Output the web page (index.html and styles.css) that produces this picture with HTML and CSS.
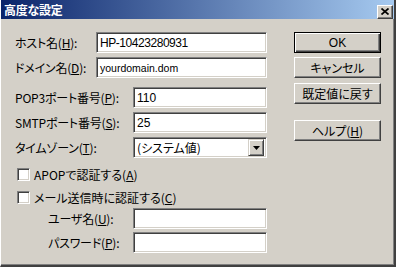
FILE: index.html
```html
<!DOCTYPE html>
<html lang="ja">
<head>
    <meta charset="UTF-8">
    <title>高度な設定</title>
    <link rel="stylesheet" href="styles.css">
</head>
<body>
    <div class="window">
        <div class="titlebar">
            <span class="title">高度な設定</span>
            <div class="close-btn">
                <svg width="8" height="7" viewBox="0 0 8 7"><path d="M0.5 0.5 L7.5 6.5 M7.5 0.5 L0.5 6.5" stroke="#000" stroke-width="1.7"/></svg>
            </div>
        </div>

        <div class="content">
            <div class="form">
                <div class="row">
                    <span class="label">ホスト名(<u>H</u>):</span>
                    <div class="field wide host-value">HP-10423280931</div>
                </div>
                <div class="row">
                    <span class="label">ドメイン名(<u>D</u>):</span>
                    <div class="field wide domain-value">yourdomain.dom</div>
                </div>

                <!-- port settings -->
                <div class="row spaced">
                    <span class="label">POP3ポート番号(<u>P</u>):</span>
                    <div class="field narrow">110</div>
                </div>
                <div class="row">
                    <span class="label">SMTPポート番号(<u>S</u>):</span>
                    <div class="field narrow">25</div>
                </div>
                <div class="row">
                    <span class="label">タイムゾーン(<u>T</u>):</span>
                    <div class="field narrow select">
                        <span class="select-text">(システム値)</span>
                        <div class="drop-btn">
                            <svg width="7" height="4" viewBox="0 0 7 4"><path d="M0 0 H7 L3.5 4 Z" fill="#000"/></svg>
                        </div>
                    </div>
                </div>

                <div class="check-row first">
                    <div class="checkbox"></div>
                    <span>APOPで認証する(<u>A</u>)</span>
                </div>
                <div class="check-row second">
                    <div class="checkbox"></div>
                    <span>メール送信時に認証する(<u>C</u>)</span>
                </div>

                <div class="row auth first">
                    <span class="label">ユーザ名(<u>U</u>):</span>
                    <div class="field narrow"></div>
                </div>
                <div class="row auth">
                    <span class="label">パスワード(<u>P</u>):</span>
                    <div class="field narrow"></div>
                </div>
            </div>

            <div class="buttons">
                <div class="btn default">OK</div>
                <div class="btn">キャンセル</div>
                <div class="btn">既定値に戻す</div>
                <div class="btn help">ヘルプ(<u>H</u>)</div>
            </div>
        </div>
    </div>
</body>
</html>
```

FILE: styles.css
```css
body {
    margin: 0;
    background: #d4d0c8;
    font-family: "Noto Sans CJK JP", "Liberation Sans", sans-serif;
    font-size: 12px;
    color: #000;
}

.window {
    width: 396px;
    height: 267px;
    box-sizing: border-box;
    background: #d4d0c8;
    border-left: 1px solid #ffffff;
    border-right: 2px solid #404040;
    border-bottom: 2px solid #404040;
    box-shadow: inset -1px -1px #808080;
}

/* Title bar */
.titlebar {
    height: 19px;
    display: flex;
    align-items: center;
    justify-content: space-between;
    background: linear-gradient(90deg, #0a246a, #a6caf0);
    padding: 0 1px 0 3px;
}
.title {
    color: #fff;
    font-weight: bold;
    font-size: 12px;
    line-height: 19px;
    letter-spacing: -0.3px;
}
.close-btn {
    width: 16px;
    height: 14px;
    box-sizing: border-box;
    margin-top: 4px;
    background: #d4d0c8;
    border: 1px solid;
    border-color: #fff #404040 #404040 #fff;
    box-shadow: inset -1px -1px #808080;
    display: flex;
    align-items: center;
    justify-content: center;
}

/* Main area */
.content {
    display: flex;
    padding: 13px 0 0 14px;
    gap: 27px;
}
.form {
    width: 252px;
    display: flex;
    flex-direction: column;
}
.row {
    display: flex;
    align-items: center;
    justify-content: space-between;
    height: 21px;
    margin-bottom: 4px;
}
.row.spaced {
    margin-top: 5px;
}
.label {
    font-feature-settings: "palt";
    white-space: nowrap;
    letter-spacing: -0.2px;
}
.row.auth {
    padding-left: 33px;
    margin-bottom: 3px;
}
.row.auth.first {
    margin-top: 4px;
}

/* Sunken edit fields */
.field {
    height: 21px;
    box-sizing: border-box;
    background: #fff;
    border: 1px solid;
    border-color: #808080 #fff #fff #808080;
    box-shadow: inset 1px 1px #404040, inset -1px -1px #d4d0c8;
    padding: 0 3px;
    display: flex;
    align-items: center;
    font-family: "Liberation Sans", sans-serif;
    font-size: 12px;
}
.field.wide {
    width: 171px;
}
.field.narrow {
    width: 134px;
}
.host-value {
    font-size: 12px;
    letter-spacing: -0.45px;
}
.domain-value {
    font-size: 10.5px;
}
.select {
    padding: 0 2px 0 3px;
    justify-content: space-between;
}
.select-text {
    font-family: "Noto Sans CJK JP", sans-serif;
    font-feature-settings: "palt";
}
.drop-btn {
    width: 16px;
    height: 17px;
    box-sizing: border-box;
    background: #d4d0c8;
    border: 1px solid;
    border-color: #d4d0c8 #404040 #404040 #d4d0c8;
    box-shadow: inset 1px 1px #fff, inset -1px -1px #808080;
    display: flex;
    align-items: center;
    justify-content: center;
}

/* Checkboxes */
.check-row {
    display: flex;
    align-items: center;
    gap: 4px;
    height: 13px;
    padding-left: 2px;
    font-feature-settings: "palt";
}
.check-row.first {
    margin-top: 6px;
    margin-bottom: 10px;
}
.checkbox {
    width: 13px;
    height: 13px;
    box-sizing: border-box;
    background: #fff;
    border: 1px solid;
    border-color: #808080 #fff #fff #808080;
    box-shadow: inset 1px 1px #404040, inset -1px -1px #d4d0c8;
}

/* Right column buttons */
.buttons {
    display: flex;
    flex-direction: column;
    width: 87px;
}
.btn {
    height: 21px;
    box-sizing: border-box;
    border: 1px solid;
    border-color: #fff #404040 #404040 #fff;
    box-shadow: inset -1px -1px #808080;
    display: flex;
    align-items: center;
    justify-content: center;
    margin-bottom: 4px;
    font-feature-settings: "palt";
}
.btn.default {
    border: 1px solid #000;
    box-shadow: inset 1px 1px #fff, inset -1px -1px #404040, inset -2px -2px #808080;
    font-family: "Liberation Sans", sans-serif;
}
.btn:nth-child(3) {
    margin-top: 1px;
}
.btn.help {
    margin-top: 12px;
}
```
